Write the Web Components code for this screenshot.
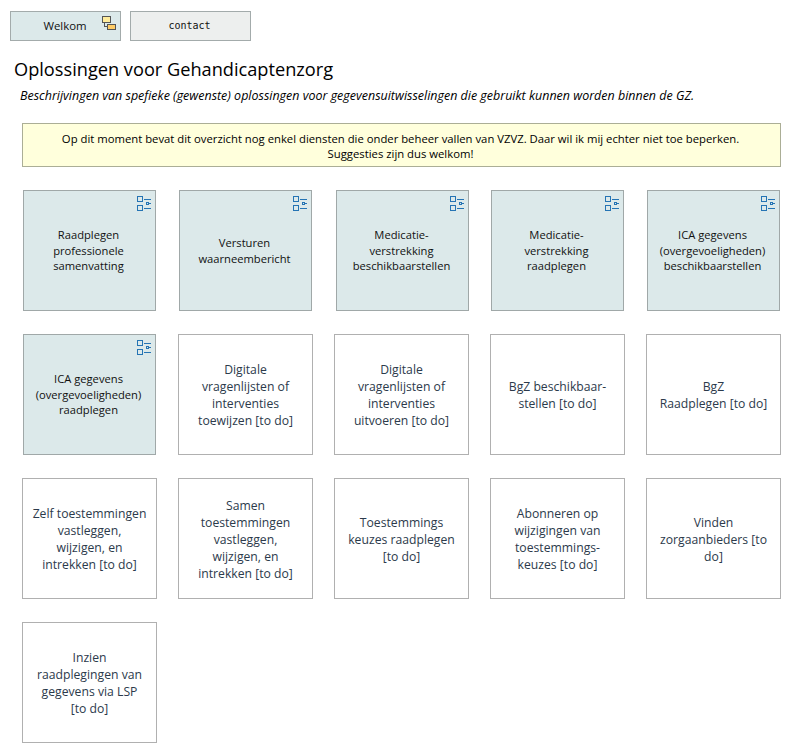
<!DOCTYPE html>
<html lang="nl">
<head>
<meta charset="utf-8">
<title>Oplossingen voor Gehandicaptenzorg</title>
<style>
html, body { margin: 0; background: #fff; }
body { font-family: "Open Sans", "Noto Sans", sans-serif; color: #000; }
</style>
</head>
<body>
<solution-page>
  <nav-bar slot="nav">
    <nav-button variant="home">Welkom</nav-button>
    <nav-button variant="mono">contact</nav-button>
  </nav-bar>
  <span slot="title">Oplossingen voor Gehandicaptenzorg</span>
  <span slot="intro">Beschrijvingen van spefieke (gewenste) oplossingen voor gegevensuitwisselingen die gebruikt kunnen worden binnen de GZ.</span>
  <note-box slot="note">Op dit moment bevat dit overzicht nog enkel diensten die onder beheer vallen van VZVZ. Daar wil ik mij echter niet toe beperken.<br>Suggesties zijn dus welkom!</note-box>
  <card-grid slot="grid">
    <solution-card done>Raadplegen<br>professionele<br>samenvatting</solution-card>
    <solution-card done>Versturen<br>waarneembericht</solution-card>
    <solution-card done wide-left>Medicatie-<br>verstrekking<br>beschikbaarstellen</solution-card>
    <solution-card done>Medicatie-<br>verstrekking<br>raadplegen</solution-card>
    <solution-card done>ICA gegevens<br>(overgevoeligheden)<br>beschikbaarstellen</solution-card>
    <solution-card done>ICA gegevens<br>(overgevoeligheden)<br>raadplegen</solution-card>
    <solution-card>Digitale<br>vragenlijsten of<br>interventies<br>toewijzen [to do]</solution-card>
    <solution-card>Digitale<br>vragenlijsten of<br>interventies<br>uitvoeren [to do]</solution-card>
    <solution-card>BgZ beschikbaar-<br>stellen [to do]</solution-card>
    <solution-card>BgZ<br>Raadplegen [to do]</solution-card>
    <solution-card>Zelf toestemmingen<br>vastleggen,<br>wijzigen, en<br>intrekken [to do]</solution-card>
    <solution-card>Samen<br>toestemmingen<br>vastleggen,<br>wijzigen, en<br>intrekken [to do]</solution-card>
    <solution-card>Toestemmings<br>keuzes raadplegen<br>[to do]</solution-card>
    <solution-card>Abonneren op<br>wijzigingen van<br>toestemmings-<br>keuzes [to do]</solution-card>
    <solution-card>Vinden<br>zorgaanbieders [to<br>do]</solution-card>
    <solution-card>Inzien<br>raadplegingen van<br>gegevens via LSP<br>[to do]</solution-card>
  </card-grid>
</solution-page>

<script>
const pageTemplate = document.createElement('template');
pageTemplate.innerHTML = `
<style>
:host { display: block; padding: 11px 10px 0; }
h1 { margin: 16px 0 0 4px; font-size: 18.2px; line-height: 24px; font-weight: 400; }
p { margin: 7px 0 0 10px; font-size: 12.48px; line-height: 16px; font-style: italic; white-space: nowrap; }
.note { display: block; margin: 19px 0 0 12px; }
.grid { display: block; margin: 23px 0 0 12px; }
</style>
<slot name="nav"></slot>
<h1><slot name="title"></slot></h1>
<p><slot name="intro"></slot></p>
<div class="note"><slot name="note"></slot></div>
<div class="grid"><slot name="grid"></slot></div>
`;

class SolutionPage extends HTMLElement {
  constructor() {
    super();
    this.attachShadow({ mode: 'open' }).appendChild(pageTemplate.content.cloneNode(true));
  }
}
customElements.define('solution-page', SolutionPage);

class NavBar extends HTMLElement {
  constructor() {
    super();
    this.attachShadow({ mode: 'open' }).innerHTML = `
<style>
:host { display: flex; gap: 9px; }
</style>
<slot></slot>`;
  }
}
customElements.define('nav-bar', NavBar);

const navIcon = `
<svg width="15" height="15" viewBox="0 0 15 15" shape-rendering="crispEdges" aria-hidden="true">
  <path d="M2.5 6v4.5H6" fill="none" stroke="#555"/>
  <rect x="0.5" y="0.5" width="8" height="6" fill="#ffec9c" stroke="#555"/>
  <rect x="5.5" y="8.5" width="8" height="5" fill="#ffcc66" stroke="#555"/>
</svg>`;

class NavButton extends HTMLElement {
  constructor() {
    super();
    const variant = this.getAttribute('variant');
    this.attachShadow({ mode: 'open' }).innerHTML = `
<style>
:host {
  display: flex;
  position: relative;
  box-sizing: border-box;
  height: 30px;
  align-items: center;
  justify-content: center;
  border: 1px solid #a3abab;
  font-size: 11.4px;
  color: #111;
}
:host([variant="home"]) { width: 111px; background: #dce9ea; padding: 0 1px 2px 0; }
:host([variant="mono"]) {
  width: 121px;
  background: #edefee;
  font-family: "DejaVu Sans Mono", "Liberation Mono", monospace;
  font-size: 10px;
  padding: 0 2px 2px 0;
}
svg { position: absolute; top: 4px; right: 3px; }
</style>
<slot></slot>${variant === 'home' ? navIcon : ''}`;
  }
}
customElements.define('nav-button', NavButton);

class NoteBox extends HTMLElement {
  constructor() {
    super();
    this.attachShadow({ mode: 'open' }).innerHTML = `
<style>
:host {
  display: block;
  box-sizing: border-box;
  width: 759px;
  height: 44px;
  padding: 7px 10px 0 8px;
  border: 1px solid #abae96;
  background: #ffffdc;
  font-size: 11.3px;
  line-height: 15px;
  text-align: center;
}
</style>
<slot></slot>`;
  }
}
customElements.define('note-box', NoteBox);

class CardGrid extends HTMLElement {
  constructor() {
    super();
    this.attachShadow({ mode: 'open' }).innerHTML = `
<style>
:host {
  display: grid;
  grid-template-columns: repeat(5, 135px);
  grid-auto-rows: 121px;
  column-gap: 21px;
  row-gap: 23px;
}
</style>
<slot></slot>`;
  }
}
customElements.define('card-grid', CardGrid);

const cardIcon = `
<svg width="15" height="15" viewBox="0 0 15 15" shape-rendering="crispEdges" aria-hidden="true">
  <g fill="none" stroke="#2574b4">
    <rect x="0.5" y="0.5" width="5" height="5"/>
    <rect x="0.5" y="9.5" width="5" height="5"/>
    <path d="M7 3.5h7M7 12.5h7M12 7.5h2"/>
    <rect x="9.5" y="6.5" width="2" height="2"/>
  </g>
</svg>`;

class SolutionCard extends HTMLElement {
  constructor() {
    super();
    const done = this.hasAttribute('done');
    this.attachShadow({ mode: 'open' }).innerHTML = `
<style>
:host {
  display: flex;
  position: relative;
  box-sizing: border-box;
  align-items: center;
  justify-content: center;
  padding: 1.2px 0 0;
  border: 1px solid #b0b0b0;
  background: #fff;
  color: #2c3a4b;
  font-size: 12.2px;
  line-height: 17px;
  text-align: center;
}
:host([done]) {
  margin: 0 1px;
  padding: 0 2px 0 0;
  border-color: #a0a8a8;
  background: #dce9ea;
  color: #111;
  font-size: 11.2px;
  line-height: 15.5px;
}
:host([wide-left]) { margin: 0 0 0 2px; }
svg { position: absolute; top: 5px; right: 3px; }
</style>
<slot></slot>${done ? cardIcon : ''}`;
  }
}
customElements.define('solution-card', SolutionCard);
</script>
</body>
</html>
